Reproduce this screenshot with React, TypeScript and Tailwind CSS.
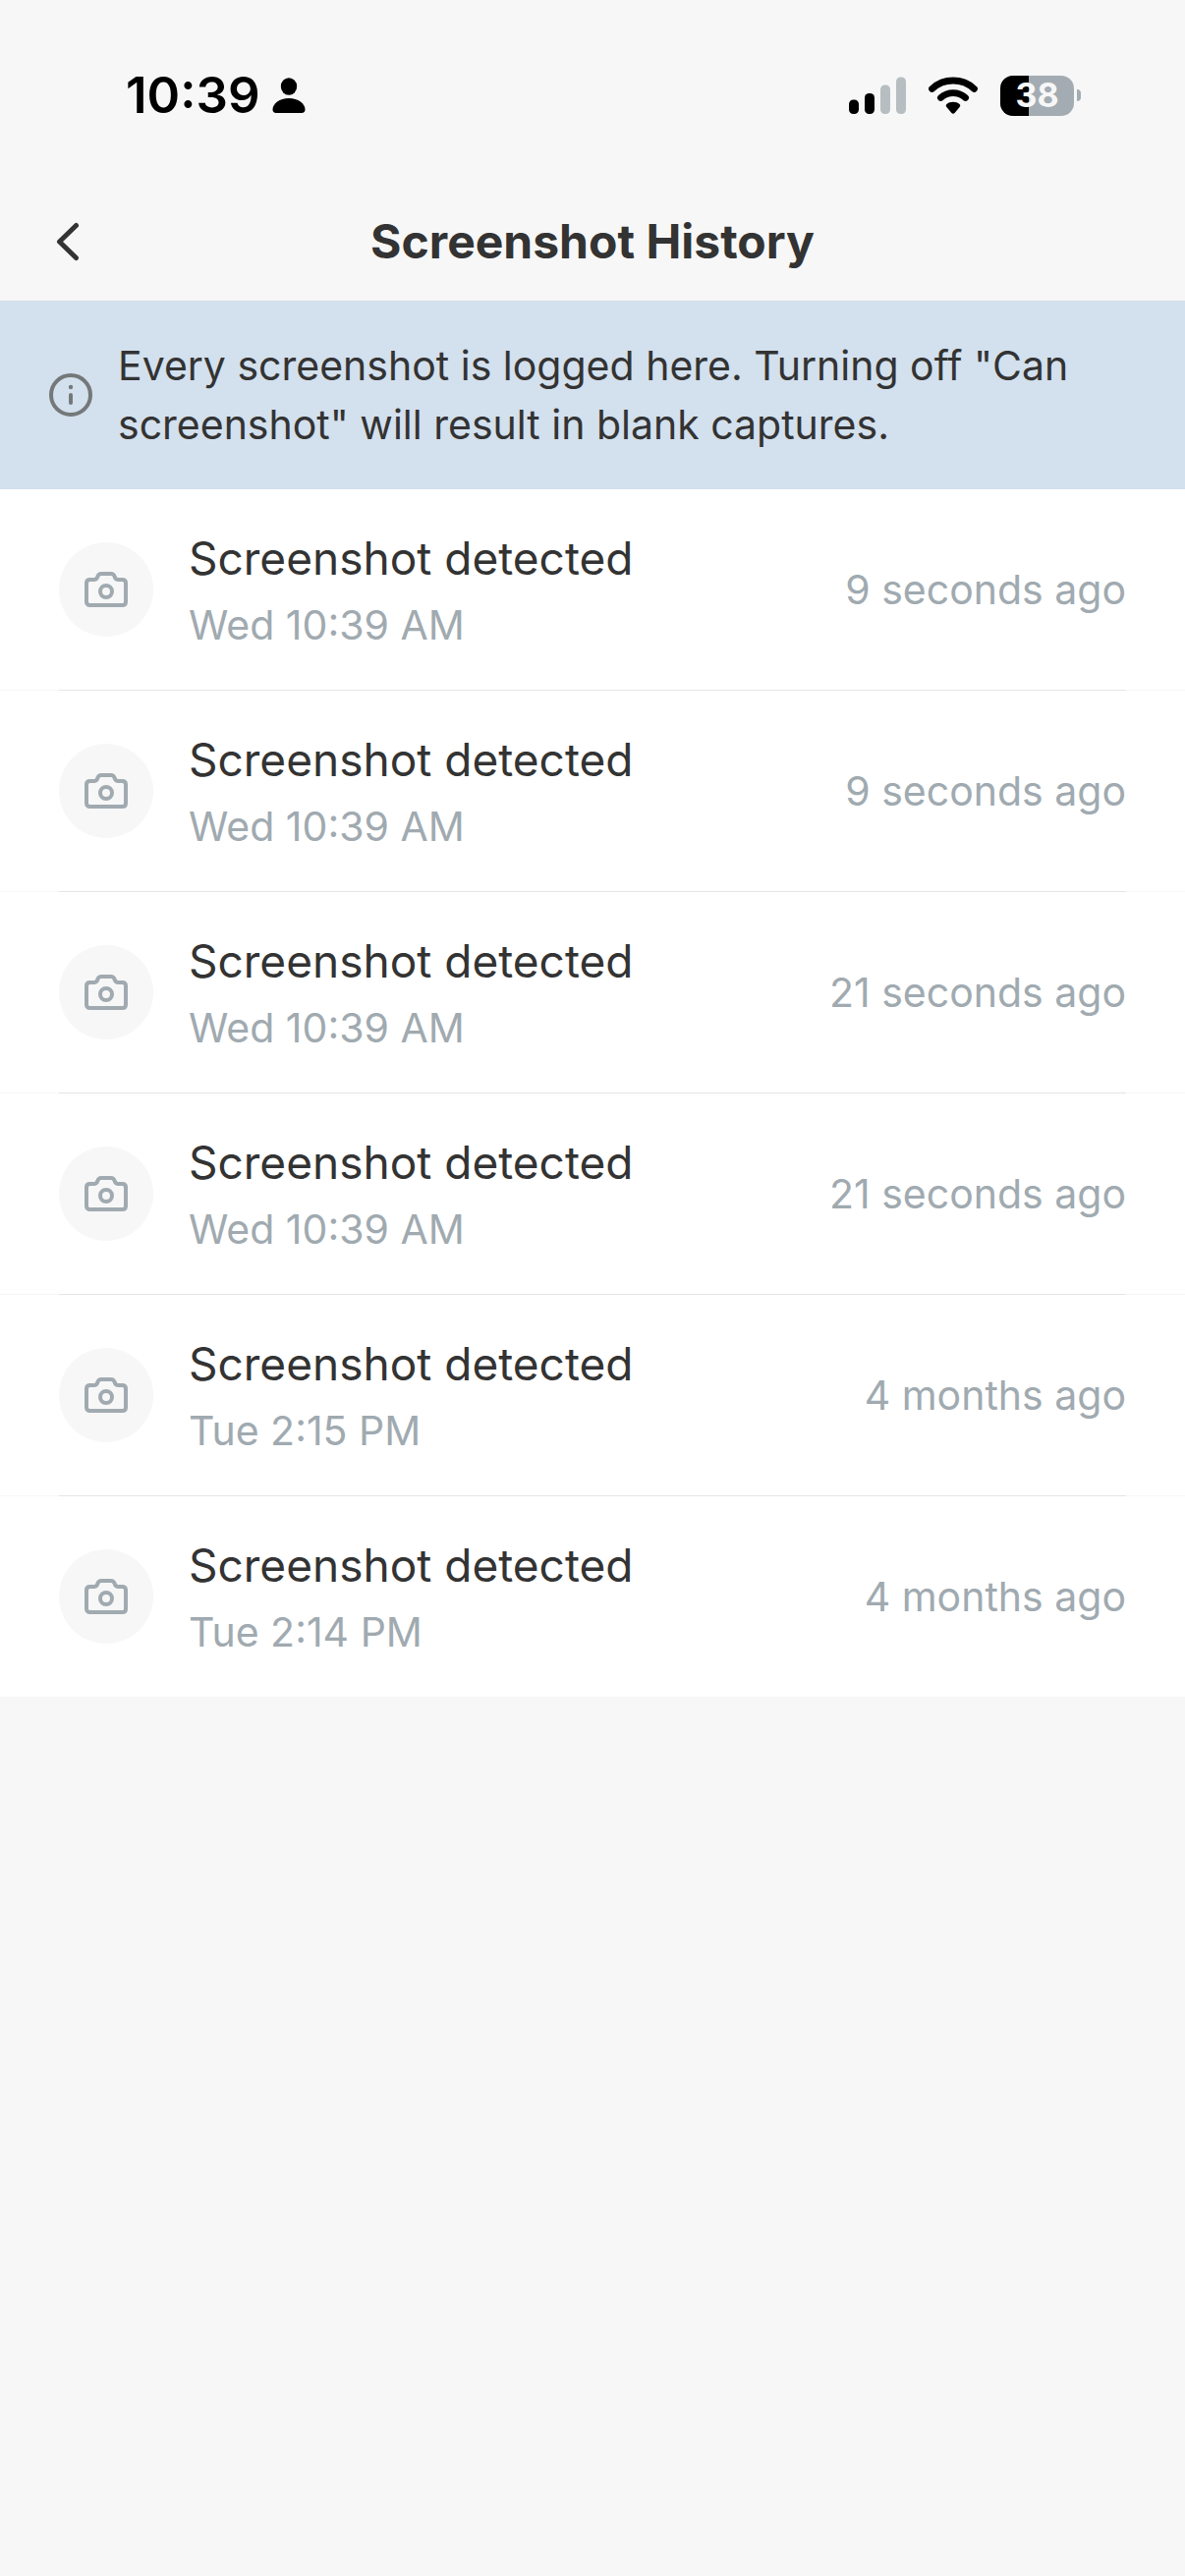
interface HistoryEntry {
  id: number;
  title: string;
  date: string;
  ago: string;
}

const entries: HistoryEntry[] = [
  { id: 1, title: 'Screenshot detected', date: 'Wed 10:39 AM', ago: '9 seconds ago' },
  { id: 2, title: 'Screenshot detected', date: 'Wed 10:39 AM', ago: '9 seconds ago' },
  { id: 3, title: 'Screenshot detected', date: 'Wed 10:39 AM', ago: '21 seconds ago' },
  { id: 4, title: 'Screenshot detected', date: 'Wed 10:39 AM', ago: '21 seconds ago' },
  { id: 5, title: 'Screenshot detected', date: 'Tue 2:15 PM', ago: '4 months ago' },
  { id: 6, title: 'Screenshot detected', date: 'Tue 2:14 PM', ago: '4 months ago' },
];

function PersonIcon() {
  return (
    <svg className="h-9 w-[34px]" viewBox="0 0 34 36" fill="currentColor" aria-hidden="true">
      <ellipse cx="17" cy="9" rx="8.2" ry="8.8" />
      <path d="M17 21c9.500 0 16.500 5.500 16.500 11.500 0 2.300-1.200 3.500-3.500 3.500H4C1.700 36 .5 34.800.5 32.500.5 26.500 7.500 21 17 21Z" />
    </svg>
  );
}

function SignalIcon() {
  return (
    <svg className="h-[38px] w-[58px]" viewBox="0 0 58 38" aria-hidden="true">
      <rect x="0" y="23.500" width="10" height="14.500" rx="4.500" fill="#000" />
      <rect x="16" y="17" width="10" height="21" rx="4.500" fill="#000" />
      <rect x="32" y="8.500" width="10" height="29.500" rx="4.500" fill="#b7bec2" />
      <rect x="48" y="0.500" width="10" height="37.500" rx="4.500" fill="#b7bec2" />
    </svg>
  );
}

function WifiIcon() {
  return (
    <svg className="h-[38px] w-[50px]" viewBox="0 0 50 38" aria-hidden="true">
      <g fill="none" stroke="#000" strokeWidth="6.800" strokeLinecap="round">
        <path d="M3.500 12.400C15.500 1.200 34.500 1.200 46.500 12.400" />
        <path d="M12.400 21.400C19.500 14.900 30.500 14.900 37.600 21.400" />
      </g>
      <path d="M25 25.800c2.700 0 4.900.9 6.500 2.200 1 .8 1 2.100.1 3l-5 5.900c-.9 1-2.300 1-3.200 0l-5-5.900c-.9-.9-.9-2.200.1-3 1.600-1.300 3.800-2.200 6.500-2.200Z" />
    </svg>
  );
}

function Battery({ level }: { level: number }) {
  return (
    <div className="flex items-center gap-[3px]">
      <div className="relative flex h-[41px] w-[75px] items-center justify-center overflow-hidden rounded-[13px] bg-[#a3acb2]">
        <div className="absolute inset-y-0 left-0 bg-black" style={{ width: `${level}%` }} />
        <span className="relative text-[34px] leading-10 font-bold text-[#f7f7f7]">{level}</span>
      </div>
      <div className="h-3 w-1 rounded-r-full bg-[#a3acb2]" />
    </div>
  );
}

function CameraIcon() {
  return (
    <svg
      className="size-12"
      viewBox="0 0 48 48"
      fill="none"
      stroke="currentColor"
      strokeWidth="4"
      strokeLinejoin="round"
      aria-hidden="true"
    >
      <path d="M4 17.500C4 15.400 5.400 14 7.500 14H11.500C13.300 14 14.500 13.300 15.100 11.600L15.500 10.600C16.200 8.700 17.300 8 19 8H29C30.700 8 31.800 8.700 32.500 10.600L32.900 11.600C33.500 13.300 34.700 14 36.500 14H40.500C42.600 14 44 15.400 44 17.500V36.500C44 38.600 42.600 40 40.500 40H7.500C5.400 40 4 38.600 4 36.500Z" />
      <circle cx="24" cy="26" r="6" />
    </svg>
  );
}

function StatusBar() {
  return (
    <div className="flex h-[186px] items-center justify-between pt-2 pr-[106px] pl-32 text-black">
      <div className="flex items-center gap-3">
        <span className="text-[51px] leading-[60px] font-semibold">10:39</span>
        <PersonIcon />
      </div>
      <div className="flex items-center gap-[23px]">
        <SignalIcon />
        <WifiIcon />
        <Battery level={38} />
      </div>
    </div>
  );
}

function HistoryRow({ entry }: { entry: HistoryEntry }) {
  return (
    <li className="group bg-white">
      <div className="flex items-center gap-9 px-[60px] py-9">
        <div className="flex size-24 shrink-0 items-center justify-center rounded-full bg-[#f7f7f7] text-[#a0aab0]">
          <CameraIcon />
        </div>
        <div className="flex flex-1 flex-col gap-1">
          <span className="text-[46px] leading-[68px] text-[#333333]">{entry.title}</span>
          <span className="text-[41px] leading-[60px] text-[#a0aab0]">{entry.date}</span>
        </div>
        <span className="text-[41px] leading-[60px] text-[#a0aab0]">{entry.ago}</span>
      </div>
      {/* Divider, lighter in the gutters */}
      <div className="bg-[#f7f7f7] px-[60px] group-last:hidden">
        <div className="h-px bg-[#e5e5e5]" />
      </div>
    </li>
  );
}

export default function App() {
  return (
    <div className="min-h-screen bg-[#f7f7f7] font-['Inter','Liberation_Sans',sans-serif] text-[#333333]">
      <StatusBar />

      <header className="grid h-[120px] grid-cols-[96px_1fr_96px] items-center px-9">
        <button type="button" aria-label="Back" className="flex size-[66px] items-center justify-center">
          <svg
            className="size-12"
            viewBox="0 0 48 48"
            fill="none"
            stroke="currentColor"
            strokeWidth="5"
            strokeLinecap="round"
            strokeLinejoin="round"
            aria-hidden="true"
          >
            <path d="M32.500 7.500 15.500 24l17 16.500" />
          </svg>
        </button>
        <h1 className="text-center text-[48px] leading-[60px] font-bold">Screenshot History</h1>
      </header>

      {/* Info banner */}
      <div className="flex items-center gap-6 bg-[#d3e0ed] px-12 py-9">
        <svg className="size-12 shrink-0" viewBox="0 0 48 48" fill="none" aria-hidden="true">
          <circle cx="24" cy="24" r="20" stroke="#757879" strokeWidth="4" />
          <circle cx="24" cy="16" r="2.200" fill="#757879" />
          <path d="M24 24v8" stroke="#757879" strokeWidth="4" strokeLinecap="round" />
        </svg>
        <p className="text-[41px] leading-[60px]">
          Every screenshot is logged here. Turning off "Can screenshot" will result in blank captures.
        </p>
      </div>

      <ul>
        {entries.map((entry) => (
          <HistoryRow key={entry.id} entry={entry} />
        ))}
      </ul>
    </div>
  );
}
